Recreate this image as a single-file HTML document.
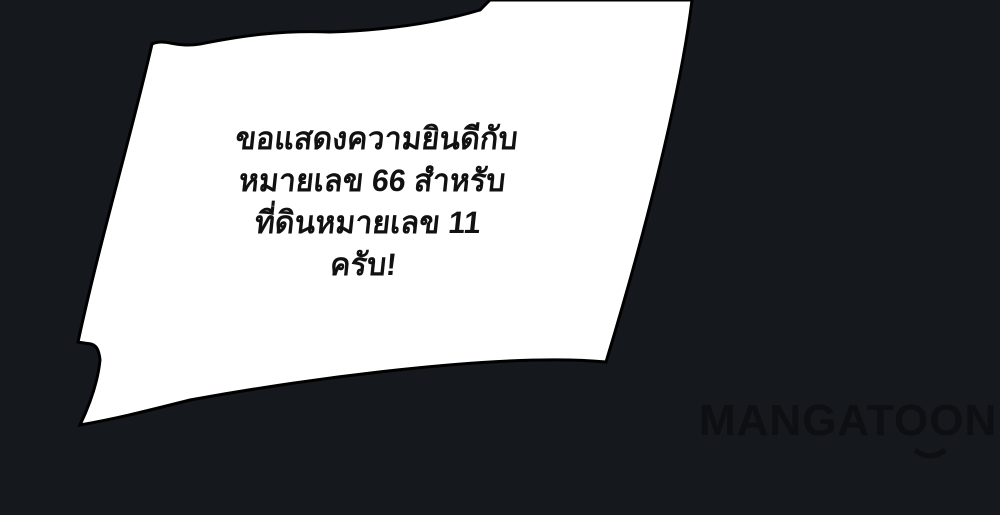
<!DOCTYPE html>
<html><head><meta charset="utf-8"><style>
html,body{margin:0;padding:0;}
body{width:1000px;height:515px;background:#15181c;position:relative;overflow:hidden;font-family:"Liberation Sans","DejaVu Sans",sans-serif;}
svg{position:absolute;left:0;top:0;}
.t{position:absolute;left:170px;width:400px;text-align:center;font-size:31px;color:#111;transform:skewX(-6deg) scaleX(0.98);line-height:42px;top:118px;font-weight:bold;}
.logo{position:absolute;left:699px;top:396px;font-size:44px;font-weight:bold;color:#0d0f12;letter-spacing:1px;font-family:"Liberation Sans",sans-serif;transform:scaleX(1.0);transform-origin:left;}
</style></head><body>
<svg width="1000" height="515" viewBox="0 0 1000 515">
<path d="M152,44 C165,38 175,48 200,44 C240,36 280,30 330,32 C390,30 440,22 480,10 L490,0 L692,0 C680,100 640,250 606,362 C500,352 300,380 190,400 C150,410 120,418 80,425 C92,400 98,380 100,360 C98,340 90,345 78,342 C100,240 130,140 152,44 Z" fill="#fff" stroke="#000" stroke-width="3"/>
<path d="M915,450 Q930,462 945,450" stroke="#0d0f12" stroke-width="5" fill="none"/>
</svg>
<div class="t">ขอแสดงความยินดีกับ<br>หมายเลข 66 สำหรับ<br>ที่ดินหมายเลข 11<br>ครับ!</div>
<div class="logo">MANGATOON</div>
</body></html>
